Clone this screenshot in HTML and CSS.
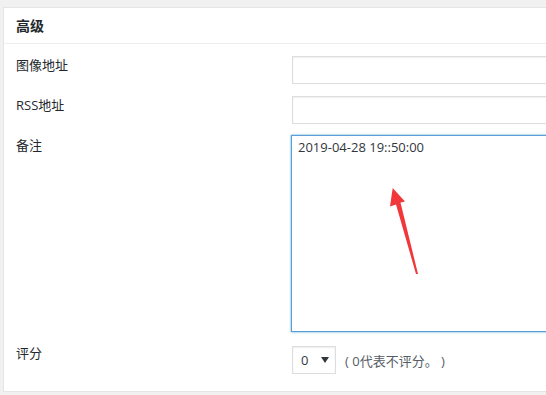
FILE: index.html
```html
<!DOCTYPE html>
<html lang="zh-CN">
<head>
    <meta charset="UTF-8">
    <title>高级</title>
    <link rel="stylesheet" href="styles.css">
</head>
<body>
    <div class="card">
        <h2 class="card-title">高级</h2>
        <div class="form">
            <label class="label">图像地址</label>
            <div class="field"><input class="text" type="text"></div>

            <label class="label">RSS地址</label>
            <div class="field"><input class="text" type="text"></div>

            <label class="label">备注</label>
            <div class="field note">
                <textarea class="area">2019-04-28 19::50:00</textarea>
                <svg class="arrow" width="32" height="90" viewBox="0 0 32 90">
                    <polygon points="2.7,0 15,13.5 10.5,14.5 28,86 26,86 6,16.5 0,18.5" fill="#f2373a"/>
                </svg>
            </div>

            <label class="label">评分</label>
            <div class="field rating">
                <span class="select">
                    <span>0</span>
                    <svg width="8" height="6" viewBox="0 0 8 6"><polygon points="0,0 8,0 4,6" fill="#32373c"/></svg>
                </span>
                <span class="hint">( 0代表不评分。 )</span>
            </div>
        </div>
    </div>
</body>
</html>
```

FILE: styles.css
```css
body {
    margin: 0;
    background-color: #f1f1f1;
    font-family: "Open Sans", "Noto Sans CJK SC", sans-serif;
    font-size: 13px;
    color: #23282d;
    overflow: hidden;
}
.card {
    margin: 7px 0 0 3px;
    width: 620px;
    height: 385px;
    background-color: white;
    border: 1px solid #e5e5e5;
    box-sizing: border-box;
}
.card-title {
    margin: 0;
    height: 35px;
    line-height: 35px;
    padding-left: 12px;
    font-size: 14px;
    font-weight: bold;
    border-bottom: 1px solid #eee;
}
.form {
    display: grid;
    grid-template-columns: 276px 1fr;
    row-gap: 12px;
    padding: 12px 0 0 12px;
}
.label {
    line-height: 18px;
}
.field {
    display: flex;
}
.text {
    width: 300px;
    height: 28px;
    box-sizing: border-box;
    border: 1px solid #ddd;
    box-shadow: inset 0 1px 2px rgba(0, 0, 0, .07);
    margin: 0;
    font: inherit;
}
.note {
    position: relative;
}
.area {
    width: 300px;
    height: 197px;
    box-sizing: border-box;
    margin: -1px 0 0 -1px;
    padding: 3px 6px;
    border: 1px solid #5b9dd9;
    box-shadow: 0 0 2px rgba(30, 140, 190, .8);
    font: inherit;
    font-size: 13px;
    color: #32373c;
    resize: none;
    outline: none;
    line-height: 16px;
}
.arrow {
    position: absolute;
    left: 98px;
    top: 52px;
}
.rating {
    align-items: center;
    margin-top: 2px;
}
.select {
    display: flex;
    align-items: center;
    justify-content: space-between;
    width: 44px;
    height: 28px;
    box-sizing: border-box;
    padding: 0 6px 0 8px;
    border: 1px solid #ddd;
    box-shadow: inset 0 1px 2px rgba(0, 0, 0, .07);
    color: #32373c;
}
.hint {
    margin-left: 9px;
    color: #555d66;
}
```
